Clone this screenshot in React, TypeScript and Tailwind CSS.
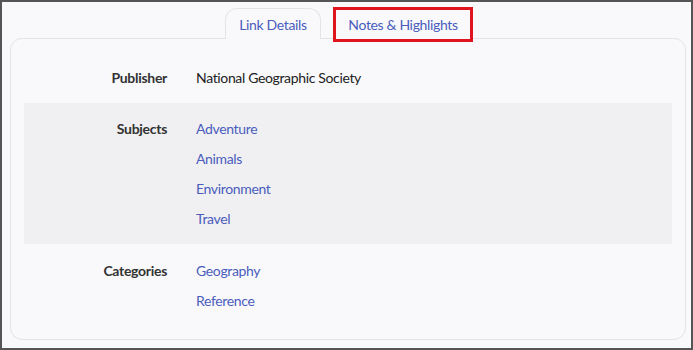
import React from "react";

const font = { fontFamily: "'Source Sans Pro', Lato, 'Noto Sans', sans-serif" };

function Row({ label, values, link }: { label: string; values: string[]; link?: boolean }) {
  return (
    <div className="flex">
      <div className="w-[143px] shrink-0 text-right font-bold text-[#333] text-[14px] leading-[20px] tracking-[-0.3px]">{label}</div>
      <div className="ml-[29px] flex flex-col gap-[10px]">
        {values.map((v) => (
          <div key={v} className={`text-[14px] leading-[20px] tracking-[-0.35px] ${link ? "text-[#4a5dbd]" : "text-[#222]"}`}>{v}</div>
        ))}
      </div>
    </div>
  );
}

export default function App() {
  return (
    <div style={font} className="w-[693px] h-[350px] border-2 border-[#555] bg-[#f9f9fb] flex flex-col">
      <div className="flex items-end pl-[223px] mt-[6px] gap-[12px] h-[30px] shrink-0">
        <div className="w-[96px] h-[31px] -mb-px relative z-10 border border-b-0 border-[#e3e3e8] rounded-t-[12px] bg-[#f9f9fb] flex items-center justify-center text-[14px] tracking-[-0.35px] text-[#4a5dbd]">
          Link Details
        </div>
        <div className="w-[140px] h-[35px] mb-[-4px] relative z-10 border-[3px] border-[#e0141e] bg-[#f9f9fb] flex items-center justify-center text-[14px] tracking-[-0.35px] text-[#4a5dbd]">
          Notes &amp; Highlights
        </div>
      </div>
      <div className="ml-[8px] mr-[5px] h-[302px] shrink-0 border border-[#e3e3e8] rounded-[12px] bg-[#f9f9fb] px-[13px] pt-[14px]">
        <div className="py-[15px]">
          <Row label="Publisher" values={["National Geographic Society"]} />
        </div>
        <div className="bg-[#f0f0f2] pt-[16px] pb-[15px]">
          <Row label="Subjects" values={["Adventure", "Animals", "Environment", "Travel"]} link />
        </div>
        <div className="pt-[17px]">
          <Row label="Categories" values={["Geography", "Reference"]} link />
        </div>
      </div>
    </div>
  );
}
